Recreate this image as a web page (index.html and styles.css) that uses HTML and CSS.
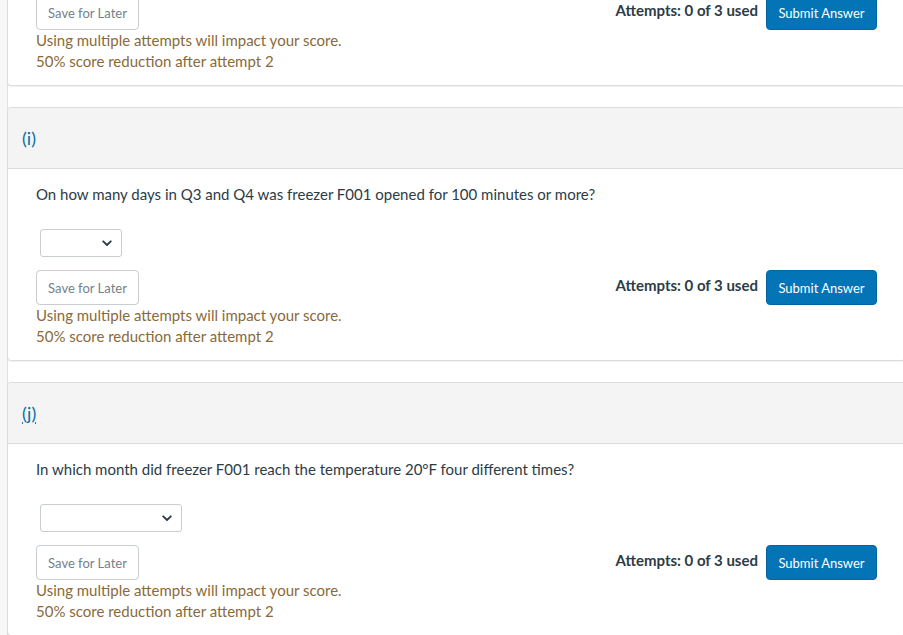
FILE: index.html
```html
<!DOCTYPE html>
<html lang="en">
<head>
<meta charset="utf-8">
<title>Quiz</title>
<link rel="stylesheet" href="styles.css">
</head>
<body>
<div class="layout">
  <div class="rail"></div>
  <main class="content">
    <section class="card card-partial">
      <div class="card-body">
        <div class="actions">
          <button class="btn-save" type="button">Save for Later</button>
          <div class="submit-group">
            <span class="attempts">Attempts: 0 of 3 used</span>
            <button class="btn-submit" type="button">Submit Answer</button>
          </div>
        </div>
        <p class="warning">Using multiple attempts will impact your score.<br>50% score reduction after attempt 2</p>
      </div>
    </section>

    <section class="card">
      <header class="card-header"><a class="part-label" href="#">(i)</a></header>
      <div class="card-body">
        <p class="question">On how many days in Q3 and Q4 was freezer F001 opened for 100 minutes or more?</p>
        <div class="select select-short"><span class="chev"><svg width="10" height="7" viewBox="0 0 10 7"><path d="M1.2 1.3 L5 5 L8.8 1.3" fill="none" stroke="#2d3b45" stroke-width="1.8" stroke-linecap="round" stroke-linejoin="round"/></svg></span></div>
        <div class="actions">
          <button class="btn-save" type="button">Save for Later</button>
          <div class="submit-group">
            <span class="attempts">Attempts: 0 of 3 used</span>
            <button class="btn-submit" type="button">Submit Answer</button>
          </div>
        </div>
        <p class="warning">Using multiple attempts will impact your score.<br>50% score reduction after attempt 2</p>
      </div>
    </section>

    <section class="card">
      <header class="card-header"><a class="part-label focused" href="#">(j)</a></header>
      <div class="card-body">
        <p class="question">In which month did freezer F001 reach the temperature 20°F four different times?</p>
        <div class="select select-long"><span class="chev"><svg width="10" height="7" viewBox="0 0 10 7"><path d="M1.2 1.3 L5 5 L8.8 1.3" fill="none" stroke="#2d3b45" stroke-width="1.8" stroke-linecap="round" stroke-linejoin="round"/></svg></span></div>
        <div class="actions">
          <button class="btn-save" type="button">Save for Later</button>
          <div class="submit-group">
            <span class="attempts">Attempts: 0 of 3 used</span>
            <button class="btn-submit" type="button">Submit Answer</button>
          </div>
        </div>
        <p class="warning">Using multiple attempts will impact your score.<br>50% score reduction after attempt 2</p>
      </div>
    </section>
  </main>
</div>
</body>
</html>
```

FILE: styles.css
```css
html, body {
  margin: 0;
  padding: 0;
  background: #fff;
  overflow: hidden;
}
body {
  font-family: Lato, "Open Sans", "Liberation Sans", sans-serif;
  color: #2d3b45;
}
.layout {
  display: flex;
  width: 906px;
  min-height: 700px;
}
.rail {
  width: 7px;
  flex: 0 0 7px;
  background: #f7f7f7;
  border-right: 1px solid #e2e2e2;
}
.content {
  flex: 1;
  margin-left: -1px;
  margin-top: -5px;
  display: flex;
  flex-direction: column;
  gap: 21px;
}
.card {
  background: #fff;
  border: 1px solid #dcdcdc;
  border-radius: 4px;
  box-shadow: 0 1px 1px rgba(0, 0, 0, 0.06);
}
.card-partial {
  border-top: none;
  border-top-left-radius: 0;
  border-top-right-radius: 0;
}
.card-partial .card-body {
  padding-top: 0;
}
.card-header {
  height: 60px;
  background: #f4f4f4;
  border-bottom: 1px solid #dcdcdc;
  border-top-left-radius: 4px;
  border-top-right-radius: 4px;
  display: flex;
  align-items: center;
  padding-left: 14px;
}
.part-label {
  font-size: 18px;
  color: #0770a3;
  text-decoration: none;
  line-height: 1;
}
.part-label.focused {
  text-decoration: underline dotted;
  text-underline-offset: 3px;
}
.card-body {
  padding: 15px 28px 13px 28px;
}
.question {
  margin: 0;
  font-size: 15px;
  line-height: 20px;
}
.select {
  margin: 25px 0 0 4px;
  height: 26px;
  border: 1px solid #c7cdd1;
  border-radius: 3px;
  background: #fff;
  display: flex;
  align-items: center;
  justify-content: flex-end;
  padding-right: 9px;
  box-sizing: content-box;
}
.select-short { width: 71px; }
.select-long { width: 131px; }
.chev { display: flex; }
.actions {
  margin-top: 13px;
  display: flex;
  justify-content: space-between;
  align-items: flex-start;
}
.card-partial .actions { margin-top: 0; }
.btn-save {
  font-family: inherit;
  font-size: 13px;
  color: #73818c;
  background: #fff;
  border: 1px solid #c7cdd1;
  border-radius: 4px;
  height: 35px;
  width: 103px;
  padding: 0;
}
.submit-group {
  display: flex;
  align-items: flex-start;
  gap: 8px;
}
.attempts {
  font-size: 15px;
  font-weight: 700;
  line-height: 18px;
  margin-top: 6px;
}
.btn-submit {
  font-family: inherit;
  font-size: 13px;
  color: #fff;
  background: #0374b5;
  border: 1px solid #0366a0;
  border-radius: 4px;
  height: 35px;
  width: 111px;
  padding: 0;
}
.warning {
  margin: 0;
  font-size: 15px;
  line-height: 21px;
  color: #8a6a3a;
}
```
